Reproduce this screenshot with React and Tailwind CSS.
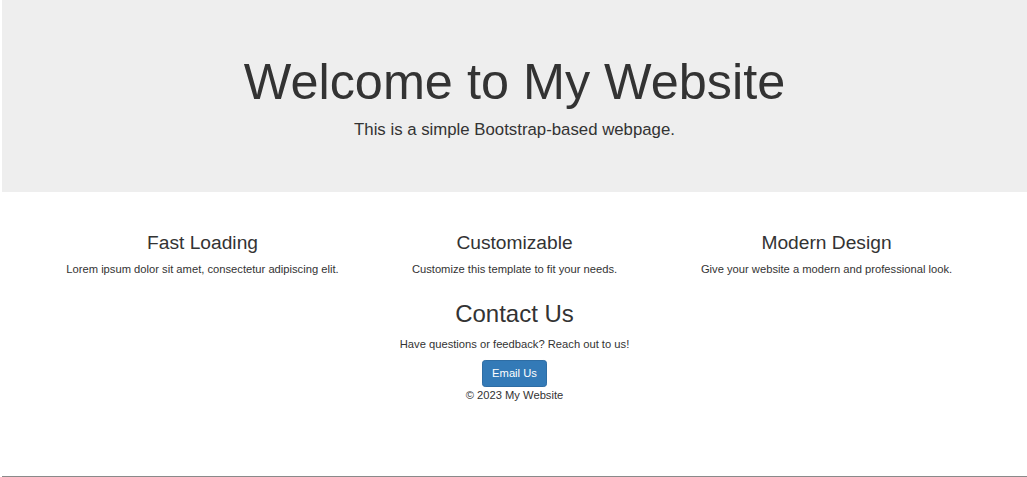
import React from 'react';

const features = [
  { title: 'Fast Loading', text: 'Lorem ipsum dolor sit amet, consectetur adipiscing elit.' },
  { title: 'Customizable', text: 'Customize this template to fit your needs.' },
  { title: 'Modern Design', text: 'Give your website a modern and professional look.' },
];

export default function App() {
  return (
    <div className="bg-white">
      <div
        className="ml-[2px] h-[477px] border-b border-[#8a8a8a] text-[#333] font-['Liberation_Sans',Arial,sans-serif]"
      >
        {/* Jumbotron */}
        <div className="bg-[#eee] h-[192px] pt-[38.4px] text-center">
          <h1 className="mt-[16px] mb-[8px] text-[50.4px] leading-[1.1] font-normal">Welcome to My Website</h1>
          <p className="text-[16.8px] leading-[24px]">This is a simple Bootstrap-based webpage.</p>
        </div>

        {/* Features */}
        <div className="mx-auto mt-[24px] w-[936px] grid grid-cols-3 text-center">
          {features.map((f) => (
            <div key={f.title}>
              <h3 className="mt-[16px] mb-[8px] text-[19.2px] leading-[1.1] font-normal">{f.title}</h3>
              <p className="mb-[8px] text-[11.2px] leading-[16px]">{f.text}</p>
            </div>
          ))}
        </div>

        {/* Contact */}
        <div className="text-center">
          <h2 className="mt-[16px] mb-[8px] text-[24px] leading-[1.1] font-normal">Contact Us</h2>
          <p className="mb-[8px] text-[11.2px] leading-[16px]">Have questions or feedback? Reach out to us!</p>
          <a
            href="#"
            className="inline-block bg-[#337ab7] border-[0.8px] border-[#2e6da4] text-white rounded-[3.2px] px-[9.6px] py-[4.8px] text-[11.2px] leading-[16px]"
          >
            Email Us
          </a>
          <p className="text-[11.2px] leading-[16px]">© 2023 My Website</p>
        </div>
      </div>
    </div>
  );
}
